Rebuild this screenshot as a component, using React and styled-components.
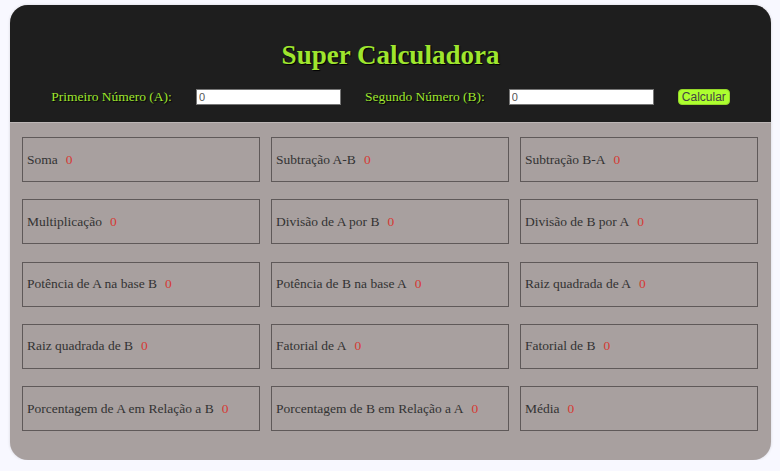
import React from "react";
import styled, { createGlobalStyle } from "styled-components";

const Global = createGlobalStyle`
  html, body { margin: 0; padding: 0; background: #f8f8ff; }
  body { font-family: "Liberation Serif", "Times New Roman", serif; }
`;

const Container = styled.div`
  width: 761px;
  margin: 5px 9px 0 10px;
  border-radius: 18px;
  overflow: hidden;
  background: #a8a09f;
  box-shadow: 0 0 3px rgba(0, 0, 0, 0.15);
`;

const Header = styled.header`
  background: #1e1e1e;
  border-bottom: 1px solid #bdb7b6;
  padding: 33px 0 17px;
  display: flex;
  flex-direction: column;
  align-items: center;
`;

const Title = styled.h1`
  margin: 0 0 17px;
  font-family: "Liberation Serif", "Times New Roman", serif;
  font-size: 27px;
  line-height: 34px;
  font-weight: bold;
  color: #9fe62e;
  text-shadow: 1px 1px 1px #000;
`;

const Form = styled.div`
  display: flex;
  align-items: center;
  gap: 24px;
  height: 16px;
`;

const Label = styled.label`
  font-size: 13.5px;
  color: #9fe62e;
  text-shadow: 1px 1px 1px #000;
  white-space: nowrap;
`;

const Input = styled.input`
  box-sizing: border-box;
  width: 145px;
  height: 16px;
  padding: 0 2px;
  border: 1px solid #767676;
  background: #fff;
  font-family: "Liberation Sans", Arial, sans-serif;
  font-size: 11px;
  color: #555;
  outline: none;
`;

const Button = styled.button`
  box-sizing: border-box;
  width: 52px;
  height: 16px;
  padding: 0;
  border: 1px solid #94d62a;
  border-radius: 4px;
  background: #adff2f;
  font-family: "Liberation Sans", Arial, sans-serif;
  font-size: 12px;
  color: #444;
  line-height: 14px;
`;

const Grid = styled.div`
  display: grid;
  grid-template-columns: repeat(3, 238px);
  grid-auto-rows: 45px;
  column-gap: 11px;
  row-gap: 17.25px;
  padding: 14px 15px 29px 12px;
`;

const Card = styled.div`
  box-sizing: border-box;
  border: 1px solid #5f5959;
  display: flex;
  align-items: center;
  padding: 0 0 0 4px;
  font-size: 13.5px;
  color: #333;
`;

const Value = styled.span`
  color: #d63a34;
  margin-left: 8px;
`;

const items = [
  "Soma",
  "Subtração A-B",
  "Subtração B-A",
  "Multiplicação",
  "Divisão de A por B",
  "Divisão de B por A",
  "Potência de A na base B",
  "Potência de B na base A",
  "Raiz quadrada de A",
  "Raiz quadrada de B",
  "Fatorial de A",
  "Fatorial de B",
  "Porcentagem de A em Relação a B",
  "Porcentagem de B em Relação a A",
  "Média",
];

export default function App() {
  return (
    <>
      <Global />
      <Container>
        <Header>
          <Title>Super Calculadora</Title>
          <Form>
            <Label htmlFor="a">Primeiro Número (A):</Label>
            <Input id="a" type="text" defaultValue="0" />
            <Label htmlFor="b">Segundo Número (B):</Label>
            <Input id="b" type="text" defaultValue="0" />
            <Button>Calcular</Button>
          </Form>
        </Header>
        <Grid>
          {items.map((t) => (
            <Card key={t}>
              {t}
              <Value>0</Value>
            </Card>
          ))}
        </Grid>
      </Container>
    </>
  );
}
